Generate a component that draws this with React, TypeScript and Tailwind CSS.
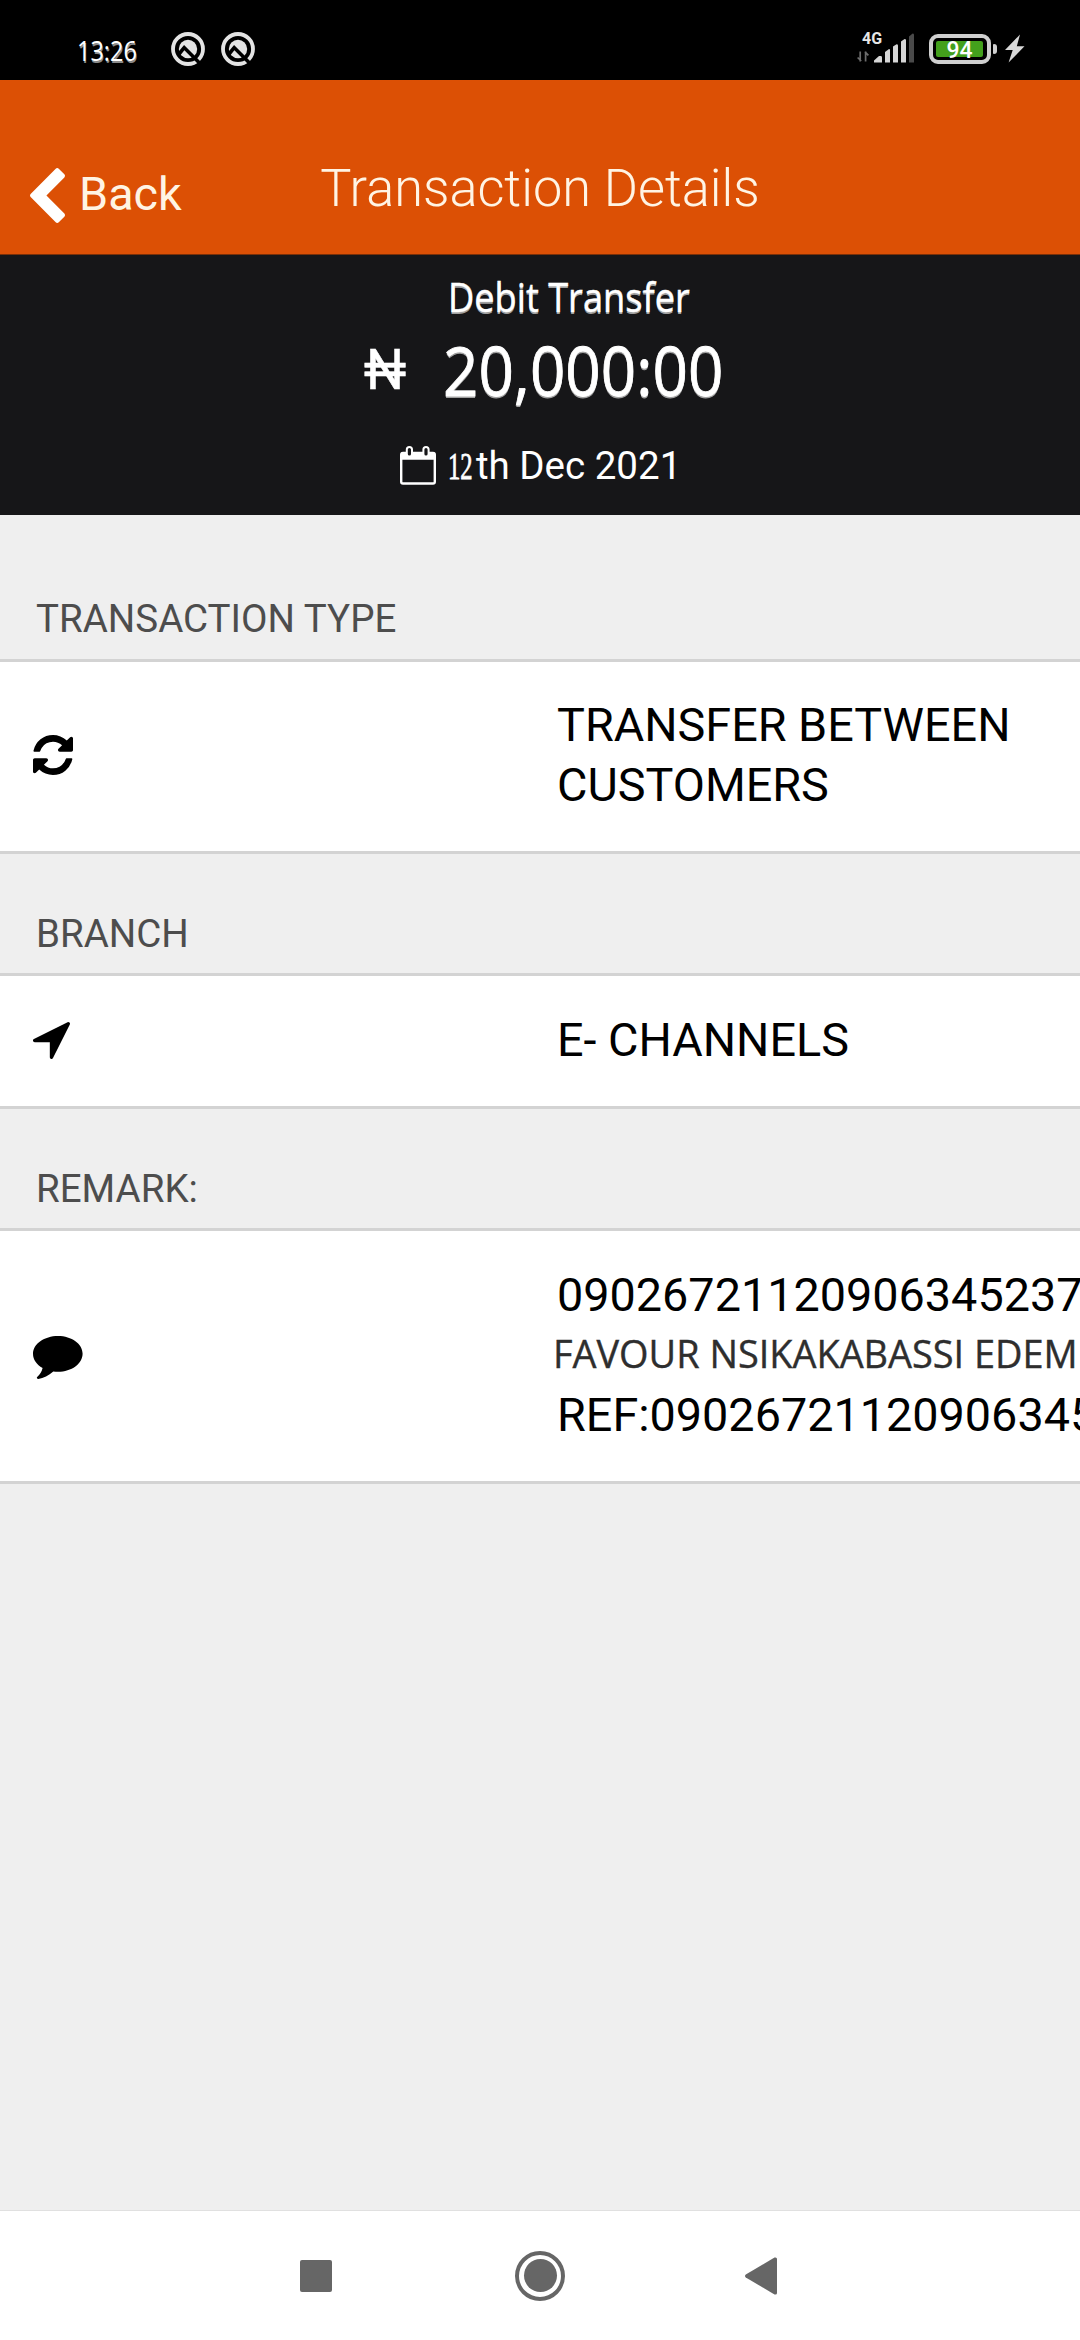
import type { ReactNode } from "react";

function DroidQIcon() {
  return (
    <svg viewBox="0 0 34 34" className="h-[34px] w-[34px]" fill="none">
      <circle cx="17" cy="17" r="15" stroke="#e4e4e4" strokeWidth="3.8" />
      <circle cx="17" cy="17" r="9.200" fill="#e4e4e4" />
      <path d="M8 22 13.200 15.600 29 31.500" stroke="#000" strokeWidth="3.600" />
    </svg>
  );
}

function SignalIcon() {
  return (
    <svg viewBox="0 0 60 34" className="h-[34px] w-[60px]">
      <path d="M3.2 28.5V18.5M4.2 28 .6 24.5M8.6 18.5v10M8 18.8l3.4 3.6" stroke="#6d6d6d" strokeWidth="1.7" fill="none" />
      <path d="M17 29.5v-2l5-4.6 2 .2q1 .2 1 1.2v5.2z" fill="#d6d6d6" />
      <path d="M28 29.5V19l4-3q1 0 1 1v12.5z" fill="#d6d6d6" />
      <path d="M36 29.5v-16l3.6-2.2q1.4 0 1.4 1v17.2z" fill="#d6d6d6" />
      <path d="M44 29.5V8.5l3.6-2.5q1.4 0 1.4 1v22.5z" fill="#d6d6d6" />
      <path d="M52 29.5V3.5L55.6.6q1.4 0 1.4 1v27.9z" fill="#4a4a4a" />
    </svg>
  );
}

function BoltIcon() {
  return (
    <svg viewBox="0 0 20 29" className="h-[29px] w-[20px]" fill="#d9d9d9">
      <path d="M15 .5 0 16h7.7L3.6 28.6 19.5 12.3h-7.7z" />
    </svg>
  );
}

function ChevronIcon() {
  return (
    <svg viewBox="154 26 1036 1612" preserveAspectRatio="none" className="h-[55px] w-[35px]" fill="#fff">
      <path d="M1171 301l-531 531 531 531q19 19 19 45t-19 45l-166 166q-19 19-45 19t-45-19l-742-742q-19-19-19-45t19-45l742-742q19-19 45-19t45 19l166 166q19 19 19 45t-19 45z" />
    </svg>
  );
}

function CalendarIcon() {
  return (
    <svg viewBox="0 0 36 39" className="h-[39px] w-[36px]" fill="none" stroke="#fff">
      <rect x="1.2" y="7" width="33.6" height="30.5" rx="1.8" strokeWidth="2.4" />
      <path d="M1 7.5q0-1.5 2-1.5h30q2 0 2 1.500v6.300H1z" fill="#fff" stroke="none" />
      <rect x="6.8" y="1" width="5.2" height="9.6" rx="2.6" fill="#161618" strokeWidth="2" />
      <rect x="23.4" y="1" width="5.2" height="9.6" rx="2.6" fill="#161618" strokeWidth="2" />
    </svg>
  );
}

function RefreshIcon() {
  return (
    <svg viewBox="0 0 1536 1536" className="h-[40px] w-[40px]">
      <path d="M1511 928q0 5-1 7-64 268-268 434.5t-478 166.5q-146 0-282.5-55t-243.5-157l-129 129q-19 19-45 19t-45-19-19-45v-448q0-26 19-45t45-19h448q26 0 45 19t19 45-19 45l-137 137q71 66 161 102t187 36q134 0 250-65t186-179q11-17 53-117 8-23 30-23h192q13 0 22.5 9.5t9.5 22.5zm25-800v448q0 26-19 45t-45 19h-448q-26 0-45-19t-19-45 19-45l138-138q-148-137-349-137-134 0-250 65t-186 179q-11 17-53 117-8 23-30 23h-199q-13 0-22.5-9.5t-9.5-22.5v-7q65-268 270-434.5t480-166.5q146 0 284 55.5t245 156.5l130-129q19-19 45-19t45 19 19 45z" />
    </svg>
  );
}

function LocationIcon() {
  return (
    <svg viewBox="0 256 1408 1408" className="h-[37px] w-[37px]">
      <path d="M1401 349l-640 1280q-17 35-57 35-5 0-15-2-22-5-35.5-22.5t-13.5-39.5v-576h-576q-22 0-39.5-13.5t-22.5-35.5 4-42 29-30l1280-640q13-7 29-7 27 0 45 19 15 14 18.5 34.5t-6.5 39.5z" />
    </svg>
  );
}

function CommentIcon() {
  return (
    <svg viewBox="0 0 50 43" className="h-[43px] w-[50px]">
      <path d="M25 0C38.7 0 49.6 7.9 49.6 17.8S38.7 35.8 25 35.8q-2.4 0-4.7-.3C15.6 39.600 10.600 42.300 5.300 42.900q-1.300.1-1.500-.8-.1-.8.6-1.400C6.800 38.300 8.700 36 9.600 32 3.700 28.700 0 23.600 0 17.800 0 7.900 11.300 0 25 0z" />
    </svg>
  );
}

function StatusBar() {
  return (
    <div className="flex h-20 shrink-0 items-start justify-between bg-black pl-[77px] pr-[55px] pt-8">
      <div className="flex">
        <span className="block w-[75px] origin-left scale-x-[0.87] font-['Open_Sans'] text-[27px] leading-[38px] text-white [text-shadow:1px_2px_0_#8b8b8b]">
          13:26
        </span>
        <div className="ml-[19px] flex gap-4">
          <DroidQIcon />
          <DroidQIcon />
        </div>
      </div>
      <div className="flex">
        <div className="relative mt-[1px]">
          <SignalIcon />
          <span className="absolute -top-[3px] left-[5px] text-[16px] font-bold leading-[18px] text-[#e6e6e6]">4G</span>
        </div>
        <div className="ml-[12px] mt-[2px] flex h-[30px] w-[62px] items-center rounded-[9px] border-4 border-[#d0d0d0] p-[3px]">
          <div className="flex h-4 w-[47px] items-center justify-center rounded-[2px] bg-[#43a01c] text-[23px] font-medium leading-none text-white">
            <span className="mt-[2px]">94</span>
          </div>
        </div>
        <div className="ml-[2px] mt-3 h-[10px] w-1 rounded-r-[3px] rounded-l-[1px] bg-[#d0d0d0]" />
        <div className="ml-2 mt-[2px]">
          <BoltIcon />
        </div>
      </div>
    </div>
  );
}

function Header() {
  return (
    <header className="grid h-[175px] shrink-0 grid-cols-[1fr_auto_1fr] items-start border-b border-[#7a3008] bg-[#dc5005] text-[#fff4e4]">
      <div className="flex pl-[30px] pt-[88px]">
        <ChevronIcon />
        <span className="ml-[14px] mt-[3px] text-[46.75px] leading-none">Back</span>
      </div>
      <h1 className="pt-[83px] text-[52.250px] font-light leading-none">Transaction Details</h1>
    </header>
  );
}

function Summary() {
  return (
    <section className="flex h-[260px] shrink-0 flex-col bg-[#161618] text-white">
      <p className="ml-[448px] mt-4 origin-left scale-x-[0.905] font-['Open_Sans'] text-[40px] leading-[52px] [-webkit-text-stroke:0.4px_#fff] [text-shadow:0_1.500px_0_#a0a0a0]">
        Debit Transfer
      </p>
      <div className="mt-[7px] flex pl-[364px] leading-[80px]">
        <span className="block w-[79px] origin-left scale-x-[0.95] text-[56px] [-webkit-text-stroke:0.5px_#fff]">₦</span>
        <span className="block origin-left scale-x-[0.925] font-['Open_Sans'] text-[67px] [-webkit-text-stroke:0.8px_#fff] [text-shadow:0_1.500px_0_#a0a0a0]">
          20,000:00
        </span>
      </div>
      <div className="mt-[34px] flex pl-[400px] text-[38.5px] leading-[44px]">
        <div className="mt-[2px]">
          <CalendarIcon />
        </div>
        <span className="ml-3 block w-[28px] origin-left scale-x-[0.64] font-['Liberation_Serif'] [-webkit-text-stroke:0.8px_#fff]">12</span>
        <span>th Dec 2021</span>
      </div>
    </section>
  );
}

function SectionLabel({ children, className }: { children: ReactNode; className: string }) {
  return (
    <h2 className={"flex shrink-0 items-end pl-9 text-[38.5px] leading-[44px] text-[#4d4d4d] " + className}>
      {children}
    </h2>
  );
}

function Row({ icon, children, className }: { icon: ReactNode; children: ReactNode; className: string }) {
  return (
    <div className={"flex shrink-0 items-center border-y-[3px] border-[#d3d3d3] bg-white pl-[33px] " + className}>
      <div className="w-[524px] shrink-0">{icon}</div>
      <div className="shrink-0 whitespace-nowrap text-[46.75px] leading-[60px]">{children}</div>
    </div>
  );
}

function NavBar() {
  return (
    <nav className="flex h-[130px] shrink-0 items-center border-t border-[#e0e0e0] bg-white pl-[300px]">
      <div className="h-8 w-8 rounded-[2px] bg-[#666666]" />
      <div className="ml-[183px] flex h-[50px] w-[50px] items-center justify-center rounded-full border-4 border-[#666666]">
        <div className="h-[33px] w-[33px] rounded-full bg-[#666666]" />
      </div>
      <svg viewBox="0 0 32 38" className="ml-[180px] h-[38px] w-8" fill="#666">
        <path d="M.8 17.5 29.5.6Q32 0 32 2v34q0 2-2.5 1.4L.8 20.5q-1.600-1.500 0-3z" />
      </svg>
    </nav>
  );
}

export default function App() {
  return (
    <div className="flex h-[2340px] w-[1080px] flex-col overflow-hidden bg-[#efefef] font-['Roboto',sans-serif] text-black">
      <StatusBar />
      <Header />
      <Summary />
      <SectionLabel className="h-36 pb-[18px]">TRANSACTION TYPE</SectionLabel>
      <Row className="h-[195px] pb-[3px]" icon={<RefreshIcon />}>
        <p>TRANSFER BETWEEN</p>
        <p>CUSTOMERS</p>
      </Row>
      <SectionLabel className="h-[119px] pb-[17px]">BRANCH</SectionLabel>
      <Row className="h-[136px] pb-[2px]" icon={<LocationIcon />}>
        <p>E- CHANNELS</p>
      </Row>
      <SectionLabel className="h-[119px] pb-[17px]">REMARK:</SectionLabel>
      <Row className="h-[256px] pb-[2px]" icon={<div className="pt-[5px]"><CommentIcon /></div>}>
        <p>09026721120906345237</p>
        <p className="-ml-1 -mt-[2px] mb-[2px] origin-left scale-x-[0.984] font-['Open_Sans'] text-[38.5px] text-[#2e2e2e] [-webkit-text-stroke:0.4px_#2e2e2e]">
          FAVOUR NSIKAKABASSI EDEM
        </p>
        <p>REF:0902672112090634523</p>
      </Row>
      <div className="grow" />
      <NavBar />
    </div>
  );
}
